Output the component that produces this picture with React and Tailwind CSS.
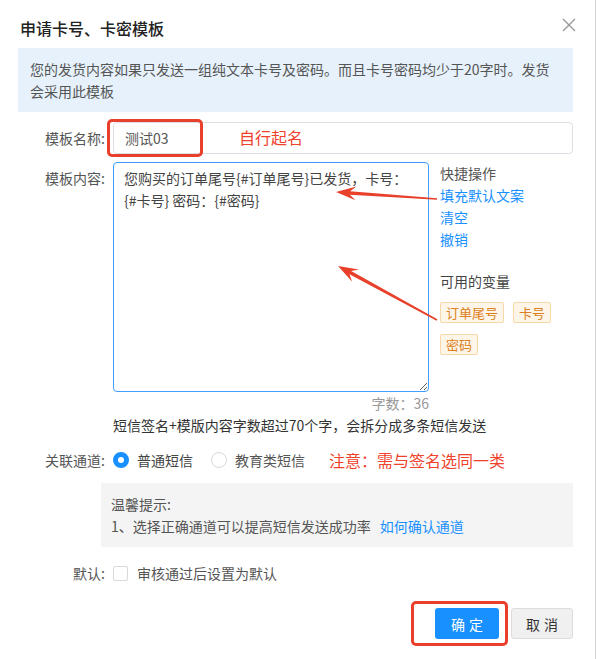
import React from "react";

export default function App() {
  const font = { fontFamily: '"Noto Sans CJK SC", "Noto Sans", sans-serif' };
  return (
    <div className="relative w-[598px] h-[659px] bg-white overflow-hidden text-[14px] leading-[22px] text-[#555]" style={font}>
      <div className="w-[596px] h-full border-r border-[#d4d4d4] pl-[18px] pr-[22px] pt-[16px]">
        {/* header */}
        <div className="flex items-center justify-between h-[24px]">
          <div className="pl-[2px] text-[16px] leading-[24px] font-medium text-[#222]">申请卡号、卡密模板</div>
          <svg width="14" height="14" viewBox="0 0 14 14" className="-mr-[3px] mb-[6px]">
            <path d="M1 1 L13 13 M13 1 L1 13" stroke="#999" strokeWidth="1.4" fill="none" />
          </svg>
        </div>

        {/* info */}
        <div className="mt-[8px] bg-[#e6f1fb] px-[12px] py-[10px] text-[#555]">
          您的发货内容如果只发送一组纯文本卡号及密码。而且卡号密码均少于20字时。发货会采用此模板
        </div>

        {/* name row */}
        <div className="mt-[10px] flex items-center">
          <div className="w-[95px] pr-[8px] text-right">模板名称:</div>
          <div className="flex-1 h-[32px] border border-[#dcdfe6] rounded-[4px] px-[11px] flex items-center text-[#555]">测试03</div>
        </div>

        {/* content row */}
        <div className="mt-[8px] flex items-start">
          <div className="w-[95px] pr-[8px] pt-[5px] text-right">模板内容:</div>
          <textarea
            className="w-[316px] h-[230px] border border-[#409eff] rounded-[4px] pl-[10px] pr-[10px] pt-[4px] text-[14px] leading-[22px] text-[#444] outline-none resize-y"
            style={font}
            defaultValue={"您购买的订单尾号{#订单尾号}已发货，卡号：\n{#卡号} 密码：{#密码}"}
          />
          <div className="ml-[11px] flex-1">
            <div className="text-[#555]">快捷操作</div>
            <div className="text-[#1890ff]">填充默认文案</div>
            <div className="text-[#1890ff]">清空</div>
            <div className="text-[#1890ff]">撤销</div>
            <div className="mt-[20px] text-[#444]">可用的变量</div>
            <div className="mt-[10px] flex flex-wrap gap-x-[9px] gap-y-[11px]">
              {["订单尾号", "卡号", "密码"].map((t) => (
                <span key={t} className="h-[21px] px-[5px] border border-[#f8d8a8] bg-[#fdf5e8] rounded-[2px] text-[13px] leading-[19px] text-[#dc7f20]">{t}</span>
              ))}
            </div>
          </div>
        </div>

        {/* count */}
        <div className="flex">
          <div className="w-[95px]" />
          <div className="w-[316px] text-right text-[#999]">字数：36</div>
        </div>
        <div className="pl-[95px] text-[#333]">短信签名+模版内容字数超过70个字，会拆分成多条短信发送</div>

        {/* channel */}
        <div className="mt-[13px] flex items-center h-[22px]">
          <div className="w-[95px] pr-[8px] text-right">关联通道:</div>
          <span className="w-[16px] h-[16px] rounded-full border-[5px] border-[#1890ff] bg-white" />
          <span className="ml-[8px] text-[#444]">普通短信</span>
          <span className="ml-[18px] w-[16px] h-[16px] rounded-full border border-[#d9d9d9] bg-white" />
          <span className="ml-[8px] text-[#555]">教育类短信</span>
          <span className="ml-[24px] text-[16px] text-[#f0412a]">注意：需与签名选同一类</span>
        </div>

        {/* tips */}
        <div className="mt-[12px] ml-[83px] bg-[#f4f4f4] px-[10px] py-[10px] text-[#555]">
          <div>温馨提示:</div>
          <div>
            1、选择正确通道可以提高短信发送成功率<span className="ml-[9px] text-[#1890ff]">如何确认通道</span>
          </div>
        </div>

        {/* default */}
        <div className="mt-[15px] flex items-center h-[22px]">
          <div className="w-[95px] pr-[8px] text-right">默认:</div>
          <span className="w-[15px] h-[15px] border border-[#d9d9d9] rounded-[2px] bg-white" />
          <span className="ml-[9px] text-[#555]">审核通过后设置为默认</span>
        </div>

        {/* buttons */}
        <div className="mt-[24px] flex justify-end gap-[12px]">
          <button className="w-[64px] h-[31px] rounded-[3px] bg-[#1890ff] text-white text-[14px] tracking-[4px] pl-[4px]">确定</button>
          <button className="w-[62px] h-[31px] rounded-[3px] bg-[#f0f0f0] border border-[#dcdcdc] text-[#333] text-[14px] tracking-[4px] pl-[4px]">取消</button>
        </div>
      </div>

      {/* annotations */}
      <div className="absolute left-[107px] top-[119px] w-[96px] h-[38px] border-[3px] border-[#e8402a] rounded-[5px] pointer-events-none" />
      <div className="absolute left-[239px] top-[125px] text-[16px] leading-[24px] text-[#f0412a]">自行起名</div>
      <div className="absolute left-[411px] top-[601px] w-[97px] h-[45px] border-[3px] border-[#e8402a] rounded-[5px] pointer-events-none" />
      <svg className="absolute left-0 top-0 pointer-events-none" width="598" height="659" viewBox="0 0 598 659">
        <polygon
          fill="#e8402a"
          points="336,192 356.43,186.40 350.09,191.17 437.04,198.20 436.96,199.80 349.85,194.77 355.47,200.36"
        />
        <polygon
          fill="#e8402a"
          points="338,266 358.91,269.43 351.15,271.12 437.39,319.27 436.61,320.73 349.43,274.28 352.21,281.73"
        />
      </svg>
    </div>
  );
}
